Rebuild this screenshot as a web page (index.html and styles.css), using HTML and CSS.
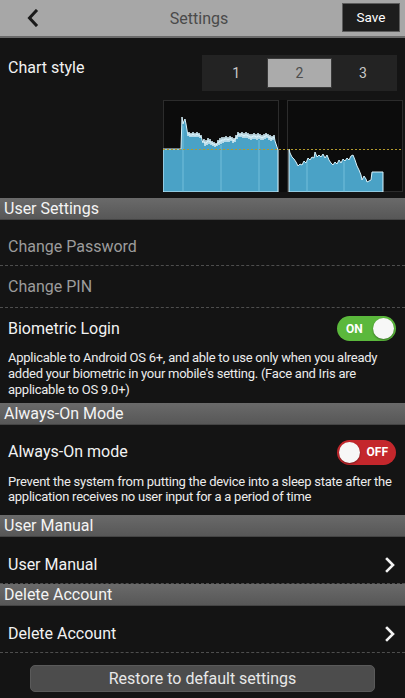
FILE: index.html
```html
<!DOCTYPE html>
<html lang="en">
<head>
    <meta charset="UTF-8">
    <meta name="viewport" content="width=device-width, initial-scale=1.0">
    <title>Settings</title>
    <link rel="stylesheet" href="styles.css">
</head>
<body>

    <header class="topbar">
        <svg class="back" width="14" height="18" viewBox="0 0 14 18">
            <path d="M10 2 L3.5 9 L10 16" fill="none" stroke="#1a1a1a" stroke-width="3" stroke-linecap="square"/>
        </svg>
        <h1 class="title">Settings</h1>
        <button class="save">Save</button>
    </header>

    <main class="settings">
        <!-- style du graphique -->
        <div class="chart-row">
            <span class="label">Chart style</span>
            <div class="chart-side">
                <div class="segment">
                    <span>1</span>
                    <span class="active">2</span>
                    <span>3</span>
                </div>
                <svg class="chart" width="240" height="92" viewBox="0 0 240 92">
                    <rect x="0" y="0" width="240" height="92" fill="#0c0c0c"/>
                    <rect x="0.5" y="0.5" width="115" height="91" fill="none" stroke="#2c2c2c"/>
                    <rect x="124.5" y="0.5" width="115" height="91" fill="none" stroke="#2c2c2c"/>
                    <!-- panneau gauche -->
                    <path fill="#4aa2c6" stroke="#d8f2fb" stroke-width="1"
                        d="M0 49 L18 49 L19 17 L20 24 L21 21 L22 19 L23 24 L24 30 L25 36 L26 32 L27 37 L28 33 L29 37 L30 32 L31 37 L32 33 L33 37 L34 32 L35 37 L36 33 L37 38 L38 35 L39 40 L40 43 L41 39 L42 46 L43 40 L44 45 L45 38 L46 44 L47 39 L48 45 L49 41 L50 46 L51 42 L52 47 L53 43 L54 46 L55 40 L56 45 L57 38 L58 44 L59 37 L60 43 L61 37 L62 42 L63 36 L64 42 L65 37 L66 42 L67 36 L68 41 L69 37 L70 43 L71 38 L72 42 L73 35 L74 39 L75 32 L76 37 L77 33 L78 37 L79 32 L80 38 L81 33 L82 38 L83 32 L84 38 L85 33 L86 39 L87 34 L88 40 L89 34 L90 39 L91 33 L92 39 L93 34 L94 40 L95 33 L96 39 L97 34 L98 40 L99 35 L100 40 L101 34 L102 39 L103 33 L104 38 L105 34 L106 40 L107 35 L108 41 L109 36 L110 40 L111 35 L112 41 L113 44 L114 47 L115 50 L115 92 L0 92 Z"/>
                    <!-- panneau droit -->
                    <path fill="#4aa2c6" stroke="#d8f2fb" stroke-width="1"
                        d="M126 92 L126 49 L127 53 L129 57 L131 59 L133 62 L135 66 L137 64 L139 65 L141 61 L143 63 L145 58 L147 60 L149 57 L151 58 L152 52 L154 57 L156 55 L158 57 L160 54 L162 58 L164 55 L166 60 L168 63 L170 65 L172 62 L174 64 L176 60 L178 63 L180 59 L182 61 L184 58 L186 60 L188 56 L190 55 L192 60 L194 66 L196 70 L198 75 L199 80 L201 76 L203 79 L204 82 L206 81 L208 80 L209 72 L220 72 L220 92 Z"/>
                    <g stroke="#7fc6e0" stroke-width="1" opacity="0.8">
                        <line x1="20" y1="26" x2="20" y2="92"/>
                        <line x1="58" y1="45" x2="58" y2="92"/>
                        <line x1="96" y1="40" x2="96" y2="92"/>
                        <line x1="144" y1="61" x2="144" y2="92"/>
                        <line x1="181" y1="62" x2="181" y2="92"/>
                    </g>
                    <line x1="0" y1="49.5" x2="240" y2="49.5" stroke="#b39a2c" stroke-width="1" stroke-dasharray="2 2"/>
                </svg>
            </div>
        </div>

        <div class="section-title">User Settings</div>
        <div class="item dim">Change Password</div>
        <div class="item dim">Change PIN</div>
        <div class="item toggle-row">
            <span class="label">Biometric Login</span>
            <span class="switch on"><b>ON</b><i></i></span>
        </div>
        <p class="desc desc-bio">Applicable to Android OS 6+, and able to use only when you already added your biometric in your mobile's setting. (Face and Iris are applicable to OS 9.0+)</p>

        <div class="section-title">Always-On Mode</div>
        <div class="item toggle-row">
            <span class="label">Always-On mode</span>
            <span class="switch off"><i></i><b>OFF</b></span>
        </div>
        <p class="desc desc-on">Prevent the system from putting the device into a sleep state after the application receives no user input for a a period of time</p>

        <div class="section-title">User Manual</div>
        <div class="item link">
            <span class="label">User Manual</span>
            <svg class="chevron" width="12" height="16" viewBox="0 0 12 16">
                <path d="M3 2 L9 8 L3 14" fill="none" stroke="#f2f2f2" stroke-width="2.6" stroke-linecap="square"/>
            </svg>
        </div>

        <div class="section-title">Delete Account</div>
        <div class="item link">
            <span class="label">Delete Account</span>
            <svg class="chevron" width="12" height="16" viewBox="0 0 12 16">
                <path d="M3 2 L9 8 L3 14" fill="none" stroke="#f2f2f2" stroke-width="2.6" stroke-linecap="square"/>
            </svg>
        </div>

        <button class="restore">Restore to default settings</button>
    </main>

</body>
</html>
```

FILE: styles.css
```css
* {
    box-sizing: border-box;
}
body {
    margin: 0;
    background: #141414;
    font-family: Roboto, "Liberation Sans", sans-serif;
    color: #f2f2f2;
    overflow: hidden;
}
.topbar {
    display: flex;
    align-items: center;
    height: 38px;
    padding: 0 5px 0 26px;
    background: #a7a7a7;
    border-bottom: 2px solid #6a6a6a;
}
.back {
    display: block;
}
.title {
    flex: 1;
    margin: 0;
    font-size: 16px;
    font-weight: normal;
    color: #4a4a4a;
    text-align: center;
    padding-left: 16px;
}
.save {
    width: 58px;
    height: 29px;
    margin-top: -2px;
    background: #1d1d1d;
    border: 1px solid #5c5c5c;
    color: #fff;
    font-family: Roboto, "Liberation Sans", sans-serif;
    font-size: 13.5px;
    font-weight: normal;
    padding: 0;
}
.chart-row {
    display: flex;
    justify-content: space-between;
    height: 160px;
    padding: 0 0 0 8px;
}
.chart-row .label {
    margin-top: 20px;
}
.label {
    font-size: 16px;
    line-height: 20px;
}
.chart-side {
    display: flex;
    flex-direction: column;
    align-items: flex-end;
}
.segment {
    display: flex;
    align-items: center;
    width: 195px;
    height: 36px;
    margin: 17px 8px 0 0;
    padding: 0 3px;
    background: #232323;
}
.segment span {
    flex: 1;
    height: 30px;
    line-height: 30px;
    text-align: center;
    font-size: 14px;
    color: #c8c8c8;
}
.segment .active {
    background: #ababab;
    border: 1px solid #3a3a3a;
    color: #4d4d4d;
    line-height: 28px;
}
.chart {
    display: block;
    margin: 9px 2px 0 0;
}
.section-title {
    height: 22px;
    line-height: 21px;
    padding-left: 4px;
    font-size: 16px;
    color: #f4f4f4;
    background: linear-gradient(#6a6a6a, #575757);
    border-bottom: 1px solid #444;
}
.item {
    display: flex;
    align-items: center;
    justify-content: space-between;
    height: 42px;
    padding: 0 9px 0 8px;
    font-size: 16px;
    border-bottom: 1px dashed #4e4e4e;
}
.section-title + .item {
    height: 46px;
    padding-top: 8px;
}
.section-title + .link {
    height: 47px;
    padding-top: 9px;
}
.dim {
    color: #9c9c9c;
}
.toggle-row {
    height: 41px;
    border-bottom: none;
}
.switch {
    display: flex;
    align-items: center;
    justify-content: space-between;
    width: 59px;
    height: 25px;
    border-radius: 13px;
    padding: 0 2px 0 9px;
    font-size: 12px;
    color: #fff;
}
.switch b {
    font-weight: bold;
}
.switch i {
    display: block;
    width: 21px;
    height: 21px;
    border-radius: 50%;
    background: #f7f7f7;
    box-shadow: 0 1px 2px rgba(0, 0, 0, 0.4);
}
.switch.on {
    background: #5bb83c;
}
.switch.off {
    background: #c4272c;
    padding: 0 8px 0 2px;
}
.desc {
    margin: 0;
    padding: 1px 8px 5px 8px;
    font-size: 13px;
    letter-spacing: -0.25px;
    line-height: 16px;
    color: #ececec;
}
.desc-on {
    padding: 3px 8px 11px 8px;
    line-height: 15px;
}
.chevron {
    display: block;
}
.restore {
    display: block;
    width: 345px;
    height: 27px;
    margin: 12px auto 0 30px;
    background: #4c4c4c;
    border: 1px solid #5a5a5a;
    border-radius: 5px;
    color: #e8e8e8;
    font-family: Roboto, "Liberation Sans", sans-serif;
    font-size: 16px;
    padding: 0;
}
```
